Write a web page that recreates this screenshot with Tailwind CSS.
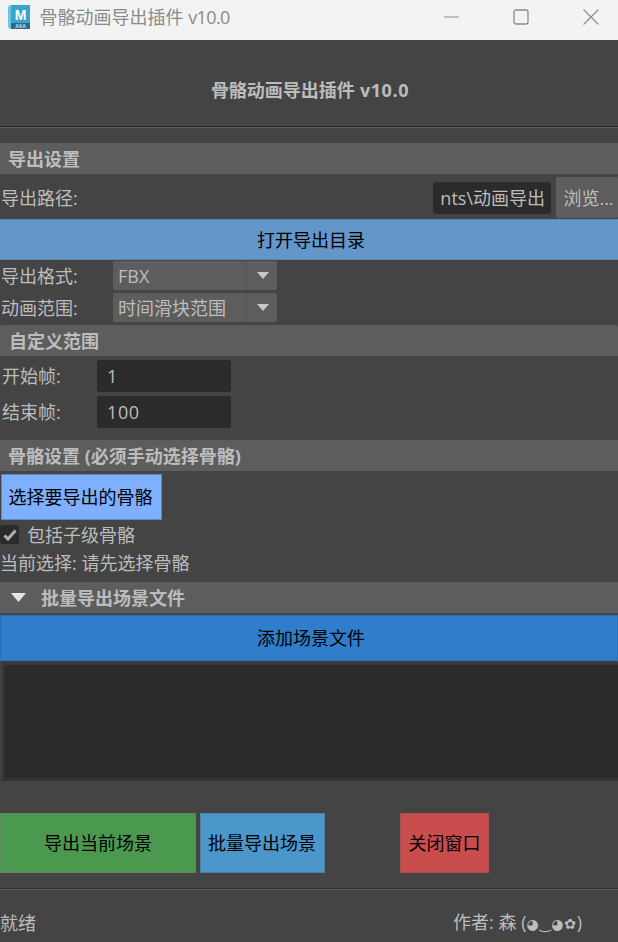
<!DOCTYPE html>
<html lang="zh-CN">
<head>
  <meta charset="UTF-8" />
  <title>骨骼动画导出插件 v10.0</title>
  <script src="https://cdn.jsdelivr.net/npm/@tailwindcss/browser@4"></script>
</head>
<body class="w-[618px] h-[942px] overflow-hidden bg-[#444444] text-[18px] leading-[24px] text-[#bdbdbd] font-['Open_Sans','Noto_Sans_CJK_SC',sans-serif]">
  <!-- title bar -->
  <div class="h-[40px] bg-[#f3f3f3] flex items-center pb-[6px] text-[#8b8b8b]">
    <svg class="ml-[8px] w-[23px] h-[24px]" viewBox="0 0 23 24">
      <path d="M2 0H4V24H2L0 22V2Z" fill="#6fc3dc" />
      <rect x="3" y="0" width="19" height="18" fill="#37a5cc" />
      <rect x="3" y="18" width="19" height="6" fill="#2b6a86" />
      <text x="12.5" y="15" text-anchor="middle" font-family="Liberation Sans" font-weight="700" font-size="14" fill="#ffffff">M</text>
      <text x="12.5" y="23" text-anchor="middle" font-family="Liberation Sans" font-weight="700" font-size="5" fill="#d5e6ee">AXA</text>
    </svg>
    <span class="ml-[8.5px]">骨骼动画导出插件 <span class="tracking-[-0.6px]">v10.0</span></span>
    <div class="ml-auto flex items-center">
      <svg class="w-[15px] h-[2px] mr-[54px]" viewBox="0 0 15 2"><path d="M0 1H15" stroke="#8b8b8b" /></svg>
      <svg class="w-[16px] h-[16px] mr-[54px]" viewBox="0 0 16 16"><rect x="1" y="1" width="14" height="14" rx="2" fill="none" stroke="#8b8b8b" stroke-width="1.3" /></svg>
      <svg class="w-[16px] h-[16px] mr-[19px]" viewBox="0 0 16 16"><path d="M0.5 0.5L15.5 15.5M15.5 0.5L0.5 15.5" stroke="#8b8b8b" stroke-width="1.1" /></svg>
    </div>
  </div>

  <!-- header -->
  <div class="h-[86px] flex items-center justify-center font-bold text-[#bcbcbc] pt-[14px] pl-[2px]">骨骼动画导出插件 <span class="ml-[5px] tracking-[0.6px]">v10.0</span></div>
  <div class="h-[2px] bg-[#262626] border-b border-[#5c5c5c]"></div>

  <!-- export settings -->
  <div class="mt-[15px] h-[31px] bg-[#5d5d5d] px-[8px] flex items-center font-bold">导出设置</div>
  <div class="h-[45px] flex items-center pl-[1px] pt-[2px]">
    <span>导出路径:</span>
    <div class="ml-auto h-[32px] w-[118px] mr-[5px] bg-[#2b2b2b] rounded-[2px] overflow-hidden flex items-center justify-end px-[6px] whitespace-nowrap">nts\动画导出</div>
    <div class="h-[41px] w-[62px] bg-[#5d5d5d] rounded-[2px] flex items-center justify-center pl-[3px] whitespace-nowrap">浏览...</div>
  </div>
  <div class="h-[41px] bg-[#6397c9] border-y border-[#5a86b0] flex items-center justify-center pl-[4px] text-black">打开导出目录</div>

  <div class="mt-[1px] h-[29px] flex items-center pl-[1px]">
    <span class="w-[112px]">导出格式:</span>
    <div class="w-[164px] h-[29px] bg-[#5d5d5d] rounded-[2px] flex items-center">
      <span class="w-[134px] pl-[5px] border-r border-[#505050] h-full flex items-center">FBX</span>
      <svg class="ml-[10px] w-[12px] h-[7px]" viewBox="0 0 12 7"><path d="M0 0H12L6 7Z" fill="#c8c8c8" /></svg>
    </div>
  </div>
  <div class="mt-[3px] h-[29px] flex items-center pl-[1px]">
    <span class="w-[112px]">动画范围:</span>
    <div class="w-[164px] h-[29px] bg-[#5d5d5d] rounded-[2px] flex items-center">
      <span class="w-[134px] pl-[5px] border-r border-[#505050] h-full flex items-center">时间滑块范围</span>
      <svg class="ml-[10px] w-[12px] h-[7px]" viewBox="0 0 12 7"><path d="M0 0H12L6 7Z" fill="#c8c8c8" /></svg>
    </div>
  </div>

  <!-- custom range -->
  <div class="mt-[3px] h-[31px] bg-[#5d5d5d] rounded-t-[2px] px-[9px] flex items-center font-bold">自定义范围</div>
  <div class="mt-[4px] flex items-center pl-[2px] h-[32px]">
    <span class="w-[95px]">开始帧:</span>
    <div class="w-[134px] h-[32px] bg-[#2b2b2b] rounded-[2px] flex items-center pl-[10px]">1</div>
  </div>
  <div class="mt-[4px] flex items-center pl-[2px] h-[32px]">
    <span class="w-[95px]">结束帧:</span>
    <div class="w-[134px] h-[32px] bg-[#2b2b2b] rounded-[2px] flex items-center pl-[10px] tracking-[0.6px]">100</div>
  </div>

  <!-- bones -->
  <div class="mt-[12px] h-[31px] bg-[#5d5d5d] px-[8px] flex items-center font-bold whitespace-nowrap">骨骼设置 (必须手动选择骨骼)</div>
  <div class="mt-[3px] ml-[1px] w-[161px] h-[46px] bg-[#7eb0ff] border border-[#6088c0] flex items-center justify-center pr-[2px] text-black">选择要导出的骨骼</div>
  <div class="mt-[5px] h-[19px] flex items-center">
    <div class="w-[19px] h-[19px] bg-[#2b2b2b] rounded-[3px] flex items-center justify-center">
      <svg class="w-[14px] h-[12px]" viewBox="0 0 14 12"><path d="M1.5 6.5L5 10L12.5 1.5" fill="none" stroke="#b0b0b0" stroke-width="3" /></svg>
    </div>
    <span class="ml-[8px]">包括子级骨骼</span>
  </div>
  <div class="h-[38px] flex items-center whitespace-nowrap">当前选择: 请先选择骨骼</div>

  <!-- batch -->
  <div class="h-[31px] bg-[#5d5d5d] flex items-center font-bold">
    <svg class="ml-[11px] w-[15px] h-[9px]" viewBox="0 0 15 9"><path d="M0 0H15L7.5 9Z" fill="#e6e6e6" /></svg>
    <span class="ml-[15px]">批量导出场景文件</span>
  </div>
  <div class="mt-[2px] h-[46px] bg-[#2f7dcb] border border-[#2a6db0] flex items-center justify-center pl-[4px] text-black">添加场景文件</div>
  <div class="mt-[1px] ml-[1px] h-[119px] bg-[#2b2b2b] border-[3px] border-[#3a3a3a] border-r-0 border-b-[#333333]"></div>

  <!-- actions -->
  <div class="mt-[32px] h-[60px] flex text-black">
    <div class="w-[196px] bg-[#4b984f] border border-[#5a8a5c] flex items-center justify-center">导出当前场景</div>
    <div class="ml-[4px] w-[125px] bg-[#4b96cb] border border-[#4a7fa6] flex items-center justify-center pr-[1px]">批量导出场景</div>
    <div class="ml-[75px] w-[89px] bg-[#c94d4d] border border-[#a85050] flex items-center justify-center">关闭窗口</div>
  </div>
  <div class="mt-[15px] h-[2px] bg-[#2b2b2b] border-b border-[#5c5c5c]"></div>

  <!-- status -->
  <div class="h-[52px] flex items-center pt-[14px]">
    <span>就绪</span>
    <span class="ml-auto mr-[36px] whitespace-nowrap">作者: 森 (<span class="font-['DejaVu_Sans','Noto_Sans_CJK_SC',sans-serif] text-[14px] tracking-[0.7px]">◕‿◕✿</span>)</span>
  </div>
</body>
</html>
